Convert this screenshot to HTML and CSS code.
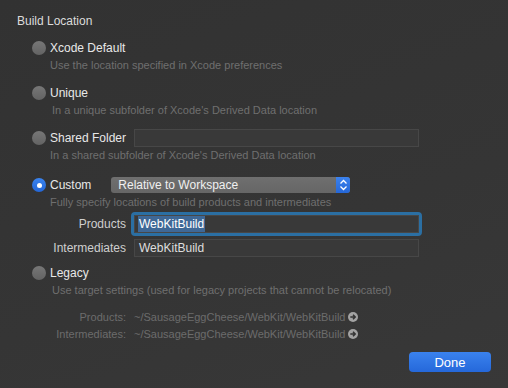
FILE: index.html
```html
<!DOCTYPE html>
<html lang="en">
<head>
  <meta charset="UTF-8">
  <meta name="viewport" content="width=device-width, initial-scale=1.0">
  <title>Build Location</title>
  <link rel="stylesheet" href="styles.css">
</head>
<body>
  <div class="sheet">
    <div class="title">Build Location</div>

    <div class="options">
      <div class="option">
        <div class="row"><span class="radio"></span><span class="label">Xcode Default</span></div>
        <div class="desc">Use the location specified in Xcode preferences</div>
      </div>

      <div class="option">
        <div class="row"><span class="radio"></span><span class="label">Unique</span></div>
        <div class="desc shifted">In a unique subfolder of Xcode's Derived Data location</div>
      </div>

      <div class="option">
        <div class="row"><span class="radio"></span><span class="label">Shared Folder</span><span class="field shared"></span></div>
        <div class="desc">In a shared subfolder of Xcode's Derived Data location</div>
      </div>

      <div class="option custom">
        <div class="row">
          <span class="radio on"></span><span class="label">Custom</span>
          <span class="popup">
            <span class="popup_text">Relative to Workspace</span>
            <span class="stepper">
              <svg width="9" height="12" viewBox="0 0 9 12"><path d="M1.5 4.5 L4.5 1.5 L7.5 4.5 M1.5 7.5 L4.5 10.5 L7.5 7.5" fill="none" stroke="#fff" stroke-width="1.3"/></svg>
            </span>
          </span>
        </div>
        <div class="desc">Fully specify locations of build products and intermediates</div>
        <div class="paths">
          <span class="path_label">Products</span>
          <span class="field focused"><span class="selected">WebKitBuild</span></span>
          <span class="path_label">Intermediates</span>
          <span class="field">WebKitBuild</span>
        </div>
      </div>

      <div class="option legacy">
        <div class="row"><span class="radio"></span><span class="label">Legacy</span></div>
        <div class="desc shifted">Use target settings (used for legacy projects that cannot be relocated)</div>
      </div>
    </div>

    <div class="resolved">
      <span class="res_label">Products:</span>
      <span class="res_path">~/SausageEggCheese/WebKit/WebKitBuild <svg class="go" width="10" height="10" viewBox="0 0 10 10"><circle cx="5" cy="5" r="5" fill="#a3a3a3"/><path d="M2.3 5 H7 M5 2.8 L7.2 5 L5 7.2" fill="none" stroke="#333" stroke-width="1.5"/></svg></span>
      <span class="res_label">Intermediates:</span>
      <span class="res_path">~/SausageEggCheese/WebKit/WebKitBuild <svg class="go" width="10" height="10" viewBox="0 0 10 10"><circle cx="5" cy="5" r="5" fill="#a3a3a3"/><path d="M2.3 5 H7 M5 2.8 L7.2 5 L5 7.2" fill="none" stroke="#333" stroke-width="1.5"/></svg></span>
    </div>

    <div class="footer">
      <button class="done">Done</button>
    </div>
  </div>
</body>
</html>
```

FILE: styles.css
```css
* {
  box-sizing: border-box;
  font-family: "Liberation Sans", Arial, sans-serif;
}

body {
  margin: 0;
  background: linear-gradient(160deg, #323232 0%, #353535 60%, #383838 100%);
  height: 388px;
}

.sheet {
  padding: 14px 0 0 17px;
}

.title {
  font-size: 12px;
  color: #dcdcdc;
  height: 14px;
  line-height: 14px;
}

.options {
  margin-top: 11px;
  padding-left: 15px;
  display: flex;
  flex-direction: column;
}

.option {
  margin-top: 12px;
}

.option:first-child {
  margin-top: 0;
}

.option.custom {
  margin-top: 14px;
}

.option.legacy {
  margin-top: 7px;
}

.row {
  display: flex;
  align-items: center;
  height: 18px;
}

.radio {
  width: 14px;
  height: 14px;
  border-radius: 50%;
  background: linear-gradient(#777, #636363);
  margin-right: 4px;
  flex-shrink: 0;
  display: flex;
  align-items: center;
  justify-content: center;
}

.radio.on {
  background: linear-gradient(#3a84f0, #2466d6);
}

.radio.on::after {
  content: '';
  width: 5px;
  height: 5px;
  border-radius: 50%;
  background: #fff;
}

.label {
  font-size: 12px;
  color: #e8e8e8;
}

.desc {
  font-size: 11px;
  color: #6f6f6f;
  padding-left: 18px;
  margin-top: 1px;
  height: 14px;
  line-height: 14px;
}

.desc.shifted {
  padding-left: 20px;
}

.field {
  display: flex;
  align-items: center;
  height: 18px;
  background: #393939;
  border: 1px solid #474747;
  font-size: 12px;
  color: #dedede;
  padding-left: 4px;
}

.field.shared {
  width: 285px;
  margin-left: 8px;
}

.popup {
  margin-left: 20px;
  width: 239px;
  height: 16px;
  border-radius: 3px;
  background: linear-gradient(#6f6f6f, #666);
  display: flex;
  align-items: center;
  justify-content: space-between;
  overflow: hidden;
}

.popup_text {
  font-size: 12px;
  color: #f0f0f0;
  padding-left: 7px;
}

.stepper {
  width: 14px;
  height: 16px;
  background: linear-gradient(#3b82ee, #2567d8);
  display: flex;
  align-items: center;
  justify-content: center;
}

.paths {
  display: grid;
  grid-template-columns: 94px 285px;
  column-gap: 8px;
  row-gap: 6px;
  margin-top: 6px;
  align-items: center;
}

.path_label {
  text-align: right;
  font-size: 12px;
  color: #cfcfcf;
}

.field.focused {
  outline: 3px solid #2b6fa3;
  outline-offset: 0;
  border-radius: 1px;
  padding-left: 3px;
}

.selected {
  background: #3f6896;
  color: #fff;
  padding: 1px 1px;
}

.resolved {
  display: grid;
  grid-template-columns: 109px auto;
  column-gap: 8px;
  row-gap: 3px;
  margin-top: 13px;
  font-size: 11px;
  color: #6c6c6c;
  line-height: 14px;
}

.res_label {
  text-align: right;
}

.res_path {
  display: flex;
  align-items: center;
  gap: 3px;
}

.footer {
  display: flex;
  justify-content: flex-end;
  padding-right: 17px;
  margin-top: 11px;
}

.done {
  width: 82px;
  height: 20px;
  border: none;
  border-radius: 4px;
  background: linear-gradient(#3a82ee, #2568da);
  color: #fff;
  font-size: 13px;
  padding: 0;
}
```
